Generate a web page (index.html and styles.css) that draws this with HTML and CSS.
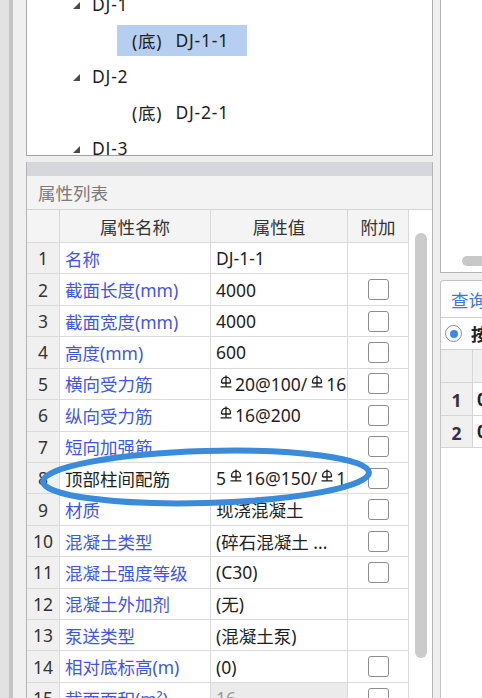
FILE: index.html
```html
<!DOCTYPE html>
<html lang="zh">
<head>
<meta charset="utf-8">
<link rel="stylesheet" href="styles.css">
</head>
<body>
<div class="screen">
  <div class="leftbar"></div>
  <div class="main">
    <div class="tree">
      <ul class="tree-list">
        <li class="tree-row"><span class="tri"></span>DJ-1</li>
        <li class="tree-row"><span class="leaf sel">(底)<span class="leaf-name">DJ-1-1</span></span></li>
        <li class="tree-row"><span class="tri"></span>DJ-2</li>
        <li class="tree-row"><span class="leaf">(底)<span class="leaf-name">DJ-2-1</span></span></li>
        <li class="tree-row"><span class="tri"></span>DJ-3</li>
      </ul>
    </div>
    <div class="props">
      <div class="props-band"></div>
      <div class="props-title">属性列表</div>
      <div class="props-body">
        <div class="grid">
          <div class="row head"><div class="c num"></div><div class="c name">属性名称</div><div class="c val">属性值</div><div class="c add">附加</div></div>
          <div class="row"><div class="c num">1</div><div class="c name">名称</div><div class="c val">DJ-1-1</div><div class="c add"></div></div>
          <div class="row"><div class="c num">2</div><div class="c name">截面长度(mm)</div><div class="c val">4000</div><div class="c add"><span class="cb"></span></div></div>
          <div class="row"><div class="c num">3</div><div class="c name">截面宽度(mm)</div><div class="c val">4000</div><div class="c add"><span class="cb"></span></div></div>
          <div class="row"><div class="c num">4</div><div class="c name">高度(mm)</div><div class="c val">600</div><div class="c add"><span class="cb"></span></div></div>
          <div class="row"><div class="c num">5</div><div class="c name">横向受力筋</div><div class="c val"><svg class="rb" viewBox="0 0 12 13"><path d="M6 0.6V11.4M1.6 8V6.2a4.4 4 0 0 1 8.8 0V8M1.6 8H10.4M0.5 11.8H11.5"/></svg>20@100/<svg class="rb" viewBox="0 0 12 13"><path d="M6 0.6V11.4M1.6 8V6.2a4.4 4 0 0 1 8.8 0V8M1.6 8H10.4M0.5 11.8H11.5"/></svg>16</div><div class="c add"><span class="cb"></span></div></div>
          <div class="row"><div class="c num">6</div><div class="c name">纵向受力筋</div><div class="c val"><svg class="rb" viewBox="0 0 12 13"><path d="M6 0.6V11.4M1.6 8V6.2a4.4 4 0 0 1 8.8 0V8M1.6 8H10.4M0.5 11.8H11.5"/></svg>16@200</div><div class="c add"><span class="cb"></span></div></div>
          <div class="row"><div class="c num">7</div><div class="c name">短向加强筋</div><div class="c val"></div><div class="c add"><span class="cb"></span></div></div>
          <div class="row"><div class="c num">8</div><div class="c name dark">顶部柱间配筋</div><div class="c val">5<svg class="rb" viewBox="0 0 12 13"><path d="M6 0.6V11.4M1.6 8V6.2a4.4 4 0 0 1 8.8 0V8M1.6 8H10.4M0.5 11.8H11.5"/></svg>16@150/<svg class="rb" viewBox="0 0 12 13"><path d="M6 0.6V11.4M1.6 8V6.2a4.4 4 0 0 1 8.8 0V8M1.6 8H10.4M0.5 11.8H11.5"/></svg>16</div><div class="c add"><span class="cb"></span></div></div>
          <div class="row"><div class="c num">9</div><div class="c name">材质</div><div class="c val">现浇混凝土</div><div class="c add"><span class="cb"></span></div></div>
          <div class="row"><div class="c num">10</div><div class="c name">混凝土类型</div><div class="c val">(碎石混凝土 ...</div><div class="c add"><span class="cb"></span></div></div>
          <div class="row"><div class="c num">11</div><div class="c name">混凝土强度等级</div><div class="c val">(C30)</div><div class="c add"><span class="cb"></span></div></div>
          <div class="row"><div class="c num">12</div><div class="c name">混凝土外加剂</div><div class="c val">(无)</div><div class="c add"></div></div>
          <div class="row"><div class="c num">13</div><div class="c name">泵送类型</div><div class="c val">(混凝土泵)</div><div class="c add"></div></div>
          <div class="row"><div class="c num">14</div><div class="c name">相对底标高(m)</div><div class="c val">(0)</div><div class="c add"><span class="cb"></span></div></div>
          <div class="row"><div class="c num">15</div><div class="c name">截面面积(m²)</div><div class="c val ro">16</div><div class="c add"><span class="cb"></span></div></div>
        </div>
        <div class="vscroll"><div class="vthumb"></div></div>
      </div>
    </div>
  </div>
  <div class="right">
    <div class="right-top"><div class="hthumb"></div></div>
    <div class="query">
      <div class="query-tab">查询</div>
      <div class="query-radio"><span class="radio"></span><span class="radio-label">按</span></div>
      <div class="qrow qhead"><div class="qnum"></div><div class="qcell"></div></div>
      <div class="qrow"><div class="qnum">1</div><div class="qcell">0</div></div>
      <div class="qrow"><div class="qnum">2</div><div class="qcell">0</div></div>
    </div>
  </div>
  <svg class="annot" width="482" height="698" viewBox="0 0 482 698">
    <ellipse cx="206" cy="477" rx="163" ry="26" transform="rotate(-1.6 206 477)"/>
  </svg>
</div>
</body>
</html>
```
FILE: styles.css
```css
* { box-sizing: border-box; }
html, body { margin: 0; padding: 0; }
body {
  width: 482px;
  height: 698px;
  overflow: hidden;
  background: #efefef;
  font-family: "Noto Sans", "Noto Sans CJK SC", sans-serif;
  font-size: 17.5px;
  color: #1e1e1e;
}
.screen {
  position: relative;
  display: flex;
  width: 482px;
  height: 698px;
  overflow: hidden;
}
.leftbar {
  flex: 0 0 26px;
  background: linear-gradient(to right, #e2e2e2 0 9px, #c5c5c5 9px 13px, #f0f0f0 13px 26px);
}
.main {
  flex: 0 0 407px;
  display: flex;
  flex-direction: column;
}
.tree {
  flex: 0 0 156px;
  background: #fff;
  border-left: 1px solid #a9a9a9;
  border-right: 1px solid #a9a9a9;
  border-bottom: 1px solid #a0a0a0;
  overflow: hidden;
}
.tree-list {
  list-style: none;
  margin: -14px 0 0 0;
  padding: 0 0 0 46px;
  letter-spacing: 0.8px;
}
.tree-row {
  height: 36px;
  display: flex;
  align-items: center;
  white-space: nowrap;
}
.tri {
  width: 0;
  height: 0;
  border-left: 7px solid transparent;
  border-bottom: 7px solid #4a4a4a;
  margin: 3px 12px 0 0;
}
.leaf {
  display: flex;
  align-items: center;
  height: 31px;
  margin-left: 44px;
  padding: 0 18px 0 15px;
}
.leaf.sel { background: #b6ceef; }
.leaf-name { margin-left: 13px; }

.props {
  flex: 1;
  margin-top: 6px;
  display: flex;
  flex-direction: column;
  border-left: 1px solid #b4b4b4;
  border-right: 1px solid #b4b4b4;
  min-height: 0;
}
.props-band { flex: 0 0 14px; background: #d5d7db; }
.props-title {
  flex: 0 0 34px;
  background: #f3f3f3;
  color: #7a7a7a;
  padding-left: 11px;
  display: flex;
  align-items: center;
  border-bottom: 1px solid #d6d6d6;
}
.props-body {
  flex: 1;
  display: flex;
  background: #fff;
  min-height: 0;
}
.grid { flex: 0 0 382px; }
.row {
  display: grid;
  grid-template-columns: 33px 151px 137px 61px;
  height: 31.43px;
}
.row.head { height: 33px; }
.c {
  border-right: 1px solid #dadada;
  border-bottom: 1px solid #dadada;
  display: flex;
  align-items: center;
  white-space: nowrap;
  overflow: hidden;
  padding-left: 5px;
}
.head .c { background: #f4f4f4; justify-content: center; padding: 0; color: #333; }
.num { background: #f0f0f0; justify-content: center; padding: 0; color: #333; }
.name { color: #4155e4; }
.name.dark { color: #1e1e1e; }
.val { color: #1e1e1e; }
.val.ro { background: #ebebeb; color: #9a9a9a; }
.add { justify-content: center; padding: 0; }
.cb {
  width: 21px;
  height: 21px;
  border: 1.5px solid #8c8c8c;
  border-radius: 3px;
  background: #fff;
}
.rb {
  width: 12px;
  height: 13px;
  margin: 0 3px 5px 4px;
  flex: 0 0 auto;
}
.rb path { fill: none; stroke: #1e1e1e; stroke-width: 1.3; }
.vscroll {
  flex: 1;
  padding: 23px 0 0 6px;
}
.vthumb {
  width: 12px;
  height: 425px;
  border-radius: 6px;
  background: #cbcbcb;
}

.right {
  flex: 0 0 49px;
  padding-left: 7px;
  display: flex;
  flex-direction: column;
}
.right-top {
  flex: 0 0 273px;
  background: #fff;
  border-left: 1px solid #b4b4b4;
  border-bottom: 1px solid #b4b4b4;
  padding: 256px 0 0 21px;
}
.hthumb {
  height: 10px;
  border-radius: 5px 0 0 5px;
  background: #c8c8c8;
}
.query {
  margin-top: 7px;
  flex: 1;
  background: #fff;
  border-left: 1px solid #c4c4c4;
  border-top: 1px solid #c4c4c4;
  border-top-left-radius: 4px;
}
.query-tab {
  height: 37px;
  color: #3b78d8;
  padding-left: 10px;
  display: flex;
  align-items: center;
  border-bottom: 1px solid #d0d0d0;
  white-space: nowrap;
}
.query-radio {
  height: 32px;
  display: flex;
  align-items: center;
  padding-left: 4px;
  border-bottom: 1px solid #d0d0d0;
  white-space: nowrap;
}
.radio {
  flex: 0 0 17px;
  width: 17px;
  height: 17px;
  border: 1.5px solid #8a8a8a;
  border-radius: 50%;
  display: flex;
  align-items: center;
  justify-content: center;
}
.radio::after {
  content: "";
  width: 8px;
  height: 8px;
  border-radius: 50%;
  background: #3d88e6;
}
.radio-label { margin-left: 9px; font-weight: bold; color: #222; }
.qrow {
  display: flex;
  height: 32.5px;
  border-bottom: 1px solid #d6d6d6;
  white-space: nowrap;
}
.qhead { height: 33px; background: #f0f0f0; }
.qnum {
  flex: 0 0 32px;
  background: #f0f0f0;
  border-right: 1px solid #d6d6d6;
  display: flex;
  align-items: center;
  justify-content: center;
  font-weight: bold;
  color: #333;
  padding-top: 3px;
}
.qcell {
  display: flex;
  align-items: center;
  padding-left: 4px;
  font-weight: bold;
  color: #222;
}
.annot {
  position: absolute;
  left: 0;
  top: 0;
  pointer-events: none;
}
.annot ellipse { fill: none; stroke: #3a8bd9; stroke-width: 6; }
```
